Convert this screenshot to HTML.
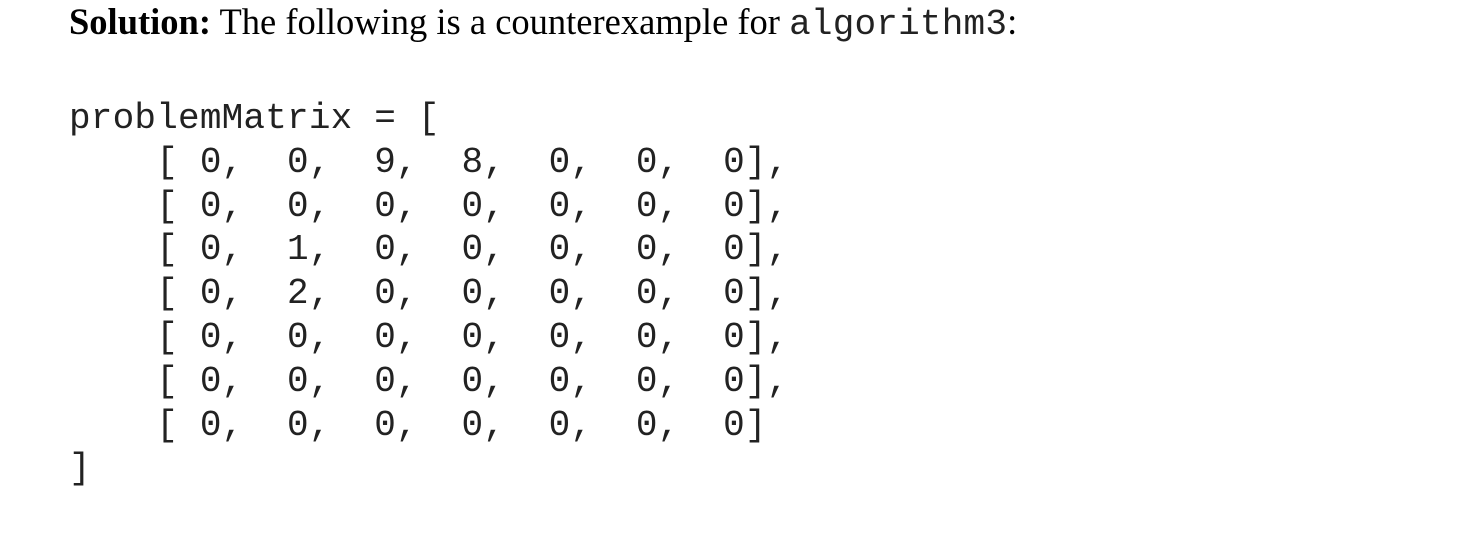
<!DOCTYPE html>
<html><head><meta charset="utf-8"><style>
html,body{margin:0;padding:0;background:#fff;width:1478px;height:534px;overflow:hidden}
.t{position:absolute;left:69px;top:0px;font-family:"Liberation Serif",serif;font-size:36.5px;line-height:44px;color:#000;white-space:pre}
.m{font-family:"Liberation Mono",monospace;font-size:36px;letter-spacing:0.2px;color:#222}
pre{position:absolute;left:69px;top:97px;margin:0;font-family:"Liberation Mono",monospace;font-size:36px;line-height:43.8px;letter-spacing:0.2px;color:#222}
</style></head><body>
<div class="t"><b>Solution:</b> The following is a counterexample for <span class="m">algorithm3</span>:</div>
<pre>problemMatrix = [
    [ 0,  0,  9,  8,  0,  0,  0],
    [ 0,  0,  0,  0,  0,  0,  0],
    [ 0,  1,  0,  0,  0,  0,  0],
    [ 0,  2,  0,  0,  0,  0,  0],
    [ 0,  0,  0,  0,  0,  0,  0],
    [ 0,  0,  0,  0,  0,  0,  0],
    [ 0,  0,  0,  0,  0,  0,  0]
]</pre>
</body></html>
